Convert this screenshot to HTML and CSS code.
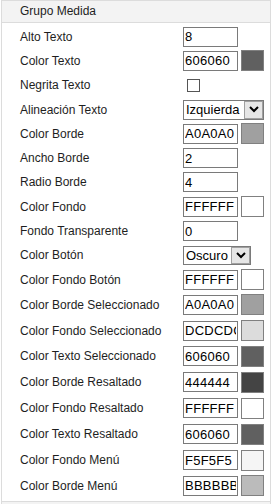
FILE: index.html
```html
<!DOCTYPE html>
<html lang="es">
<head>
    <meta charset="UTF-8">
    <meta name="viewport" content="width=device-width, initial-scale=1.0">
    <title>Propiedades</title>
    <link rel="stylesheet" href="styles.css">
</head>
<body>

    <div class="grupo">
        <div class="grupo-titulo">Grupo Medida</div>
        <div class="filas">
            <div class="fila">
                <label>Alto Texto</label>
                <input type="text" class="campo" value="8">
            </div>
            <div class="fila">
                <label>Color Texto</label>
                <input type="text" class="campo" value="606060">
                <span class="muestra" style="background-color: #606060"></span>
            </div>
            <div class="fila">
                <label>Negrita Texto</label>
                <input type="checkbox" class="check">
            </div>
            <div class="fila">
                <label>Alineación Texto</label>
                <div class="combo combo-largo">
                    <select><option>Izquierda</option><option>Centro</option><option>Derecha</option></select>
                    <span class="combo-flecha"><svg width="10" height="7" viewBox="0 0 10 7"><polyline points="1,1 5,5 9,1" fill="none" stroke="#000" stroke-width="2"/></svg></span>
                </div>
            </div>
            <div class="fila">
                <label>Color Borde</label>
                <input type="text" class="campo" value="A0A0A0">
                <span class="muestra" style="background-color: #a0a0a0"></span>
            </div>
            <div class="fila">
                <label>Ancho Borde</label>
                <input type="text" class="campo" value="2">
            </div>
            <div class="fila">
                <label>Radio Borde</label>
                <input type="text" class="campo" value="4">
            </div>
            <div class="fila">
                <label>Color Fondo</label>
                <input type="text" class="campo" value="FFFFFF">
                <span class="muestra" style="background-color: #ffffff"></span>
            </div>
            <div class="fila">
                <label>Fondo Transparente</label>
                <input type="text" class="campo" value="0">
            </div>
            <div class="fila">
                <label>Color Botón</label>
                <div class="combo combo-corto">
                    <select><option>Oscuro</option><option>Claro</option></select>
                    <span class="combo-flecha"><svg width="10" height="7" viewBox="0 0 10 7"><polyline points="1,1 5,5 9,1" fill="none" stroke="#000" stroke-width="2"/></svg></span>
                </div>
            </div>
            <div class="fila">
                <label>Color Fondo Botón</label>
                <input type="text" class="campo" value="FFFFFF">
                <span class="muestra" style="background-color: #ffffff"></span>
            </div>
            <div class="fila ancha">
                <label>Color Borde Seleccionado</label>
                <input type="text" class="campo" value="A0A0A0">
                <span class="muestra" style="background-color: #a0a0a0"></span>
            </div>
            <div class="fila ancha">
                <label>Color Fondo Seleccionado</label>
                <input type="text" class="campo" value="DCDCDC">
                <span class="muestra" style="background-color: #dcdcdc"></span>
            </div>
            <div class="fila ancha">
                <label>Color Texto Seleccionado</label>
                <input type="text" class="campo" value="606060">
                <span class="muestra" style="background-color: #606060"></span>
            </div>
            <div class="fila ancha">
                <label>Color Borde Resaltado</label>
                <input type="text" class="campo" value="444444">
                <span class="muestra" style="background-color: #444444"></span>
            </div>
            <div class="fila ancha">
                <label>Color Fondo Resaltado</label>
                <input type="text" class="campo" value="FFFFFF">
                <span class="muestra" style="background-color: #ffffff"></span>
            </div>
            <div class="fila ancha">
                <label>Color Texto Resaltado</label>
                <input type="text" class="campo" value="606060">
                <span class="muestra" style="background-color: #606060"></span>
            </div>
            <div class="fila ancha">
                <label>Color Fondo Menú</label>
                <input type="text" class="campo" value="F5F5F5">
                <span class="muestra" style="background-color: #f5f5f5"></span>
            </div>
            <div class="fila ancha">
                <label>Color Borde Menú</label>
                <input type="text" class="campo" value="BBBBBB">
                <span class="muestra" style="background-color: #bbbbbb"></span>
            </div>
        </div>
    </div>

    <div class="grupo grupo-siguiente">
        <div class="grupo-titulo"></div>
    </div>

</body>
</html>
```

FILE: styles.css
```css
body {
    font-family: Arial, "Liberation Sans", sans-serif;
    background-color: #fff;
    margin: 0;
    color: #1e1e1e;
}
.grupo {
    width: 270px;
    margin-left: 1px;
    border: 1px solid #dcdcdc;
    box-sizing: border-box;
}
.grupo-titulo {
    height: 21px;
    line-height: 21px;
    padding-left: 18px;
    font-size: 12px;
    background-color: #f3f3f3;
    border-bottom: 1px solid #dcdcdc;
}
.grupo-siguiente {
    border-top: none;
}
.filas {
    padding: 1.5px 0 2px 18px;
}
.fila {
    display: flex;
    align-items: center;
    height: 24.3px;
}
.fila.ancha {
    height: 25.9px;
}
.fila label {
    width: 163px;
    flex-shrink: 0;
    font-size: 12px;
}
.campo {
    width: 55px;
    height: 20px;
    box-sizing: border-box;
    border: 1px solid #7a7a7a;
    padding: 0 1px;
    margin: 0;
    font-family: Arial, "Liberation Sans", sans-serif;
    font-size: 13px;
    letter-spacing: 0.25px;
    color: #000;
    outline: none;
}
.muestra {
    width: 23px;
    height: 21px;
    box-sizing: border-box;
    border: 1px solid #808080;
    margin-left: 3px;
}
.check {
    appearance: none;
    width: 13px;
    height: 13px;
    margin: 0 0 0 4px;
    border: 1px solid #555;
    background-color: #fff;
}
.combo {
    display: flex;
    height: 20px;
    box-sizing: border-box;
    border: 1px solid #7a7a7a;
    background-color: #fff;
}
.combo-largo {
    width: 81px;
}
.combo-corto {
    width: 68px;
    height: 19px;
}
.combo select {
    appearance: none;
    flex: 1;
    min-width: 0;
    border: none;
    background: transparent;
    padding: 0 0 0 2px;
    margin: 0;
    font-family: Arial, "Liberation Sans", sans-serif;
    font-size: 13px;
    color: #000;
    outline: none;
}
.combo-flecha {
    width: 19px;
    flex-shrink: 0;
    display: flex;
    align-items: center;
    justify-content: center;
    background-color: #e6e6e6;
    border: 1px solid #a0a0a0;
    box-sizing: border-box;
}
```
